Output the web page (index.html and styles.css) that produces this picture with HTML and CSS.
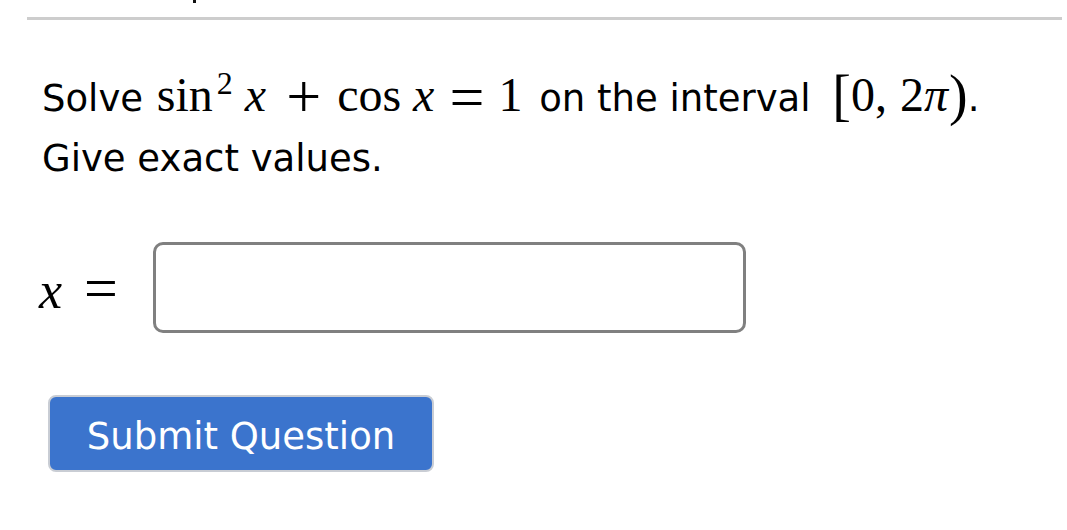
FILE: index.html
```html
<!DOCTYPE html>
<html>
<head>
<meta charset="utf-8">
<link rel="stylesheet" href="styles.css">
</head>
<body>
<div class="topbar"><span class="tick"></span></div>
<div class="rule"></div>
<div class="question">
  <div class="line">Solve <span class="math"><span class="fn">sin</span><sup class="sup">2</sup><span class="var x1">x</span><span class="op">+</span><span class="fn cos">cos</span><span class="var x2">x</span><span class="rel">=</span><span class="num one">1</span></span> on the interval <span class="math"><span class="br lb">[</span><span class="num">0,</span><span class="num two">2</span><span class="var pi">π</span><span class="br rb">)</span></span>.</div>
  <div class="line">Give exact values.</div>
</div>
<div class="answer">
  <div class="label"><span class="var lx">x</span><span class="lrel">=</span></div>
  <input class="box" type="text">
</div>
<div class="actions">
  <button class="submit">Submit Question</button>
</div>
</body>
</html>
```
FILE: styles.css
```css
html, body {
  margin: 0;
  padding: 0;
  background: #ffffff;
}
body {
  font-family: "DejaVu Sans", Verdana, sans-serif;
  color: #000;
}
.topbar {
  height: 17px;
  padding-left: 193px;
}
.tick {
  display: block;
  width: 3px;
  height: 3px;
  background: #111;
}
.rule {
  height: 3px;
  background: #cdcdcd;
  margin: 0 5px 0 27px;
}
.question {
  margin: 49px 0 0 42px;
  font-size: 37px;
  line-height: 60px;
}
.line {
  height: 60px;
  white-space: nowrap;
}
.math {
  font-family: "Liberation Serif", "Times New Roman", serif;
  font-size: 48px;
  line-height: 0;
}
.fn {
  margin-left: 2px;
}
.sup {
  font-size: 32px;
  vertical-align: 0;
  position: relative;
  top: -17px;
  margin-left: 4px;
  line-height: 0;
}
.var {
  font-style: italic;
}
.x1 {
  margin-left: 12px;
}
.op {
  font-size: 62px;
  vertical-align: -6px;
  margin-left: 20px;
}
.cos {
  margin-left: 16px;
}
.x2 {
  margin-left: 12px;
}
.rel {
  font-size: 62px;
  vertical-align: -7px;
  margin-left: 15px;
}
.one {
  margin-left: 14px;
  margin-right: 5px;
}
.br {
  font-size: 56px;
  vertical-align: -3px;
}
.lb {
  margin-left: 10px;
}
.two {
  margin-left: 13px;
}
.rb {
  margin-left: 1px;
}
.answer {
  display: flex;
  align-items: center;
  margin: 53px 0 0 39px;
}
.label {
  width: 114px;
  font-family: "Liberation Serif", "Times New Roman", serif;
  font-size: 52px;
  line-height: 1;
}
.lrel {
  font-size: 60px;
  margin-left: 22px;
}
.box {
  box-sizing: border-box;
  width: 593px;
  height: 91px;
  border: 3px solid #808080;
  border-radius: 10px;
  background: #fff;
  outline: none;
  margin: 0;
}
.actions {
  margin: 62px 0 0 48px;
}
.submit {
  box-sizing: border-box;
  width: 386px;
  height: 77px;
  background: #3b74cd;
  border: 2px solid #c9cdd4;
  border-radius: 8px;
  color: #fff;
  font-family: "DejaVu Sans", Verdana, sans-serif;
  font-size: 37px;
  padding: 6px 0 0 0;
  margin: 0;
}
```
